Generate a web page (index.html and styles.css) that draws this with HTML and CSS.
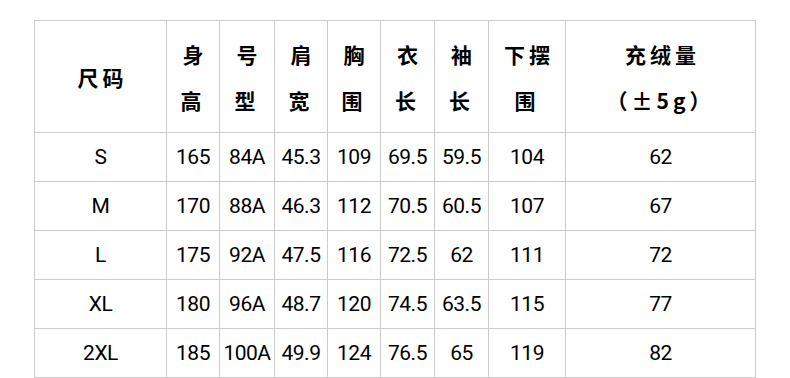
FILE: index.html
```html
<!DOCTYPE html>
<html lang="zh">
<head>
<meta charset="utf-8">
<link rel="stylesheet" href="styles.css">
</head>
<body>
<table class="size-table">
  <colgroup>
    <col class="c-size">
    <col class="c-h">
    <col class="c-type">
    <col class="c-n">
    <col class="c-n">
    <col class="c-m">
    <col class="c-m">
    <col class="c-hem">
    <col class="c-down">
  </colgroup>
  <thead>
    <tr class="head-row">
      <th>尺码</th>
      <th>身<br>高</th>
      <th>号<br>型</th>
      <th>肩<br>宽</th>
      <th>胸<br>围</th>
      <th>衣<br>长</th>
      <th>袖<br>长</th>
      <th>下摆<br>围</th>
      <th>充绒量<br>（±5g）</th>
    </tr>
  </thead>
  <tbody>
    <tr><td>S</td><td>165</td><td>84A</td><td>45.3</td><td>109</td><td>69.5</td><td>59.5</td><td>104</td><td>62</td></tr>
    <tr><td>M</td><td>170</td><td>88A</td><td>46.3</td><td>112</td><td>70.5</td><td>60.5</td><td>107</td><td>67</td></tr>
    <tr><td>L</td><td>175</td><td>92A</td><td>47.5</td><td>116</td><td>72.5</td><td>62</td><td>111</td><td>72</td></tr>
    <tr><td>XL</td><td>180</td><td>96A</td><td>48.7</td><td>120</td><td>74.5</td><td>63.5</td><td>115</td><td>77</td></tr>
    <tr><td>2XL</td><td>185</td><td>100A</td><td>49.9</td><td>124</td><td>76.5</td><td>65</td><td>119</td><td>82</td></tr>
  </tbody>
</table>
</body>
</html>
```
FILE: styles.css
```css
html, body {
  margin: 0;
  padding: 0;
  background: #fff;
}
body {
  padding: 20px 0 0 34px;
}
.size-table {
  border-collapse: collapse;
  table-layout: fixed;
  width: 722px;
  color: #000;
}
.size-table th,
.size-table td {
  border: 1px solid #cccccc;
  padding: 0;
  text-align: center;
  vertical-align: middle;
  white-space: nowrap;
}
.size-table th {
  font-family: "Noto Sans CJK SC", sans-serif;
  font-weight: 700;
  font-size: 21px;
  line-height: 46px;
  letter-spacing: 4px;
  text-indent: 4px;
  height: 111px;
}
.size-table td {
  font-family: Roboto, "Liberation Sans", sans-serif;
  font-size: 21px;
  height: 48px;
  letter-spacing: -0.5px;
}
.c-size { width: 132px; }
.c-h { width: 53px; }
.c-type { width: 55px; }
.c-n { width: 53px; }
.c-m { width: 54px; }
.c-hem { width: 77px; }
.c-down { width: 190px; }
```
